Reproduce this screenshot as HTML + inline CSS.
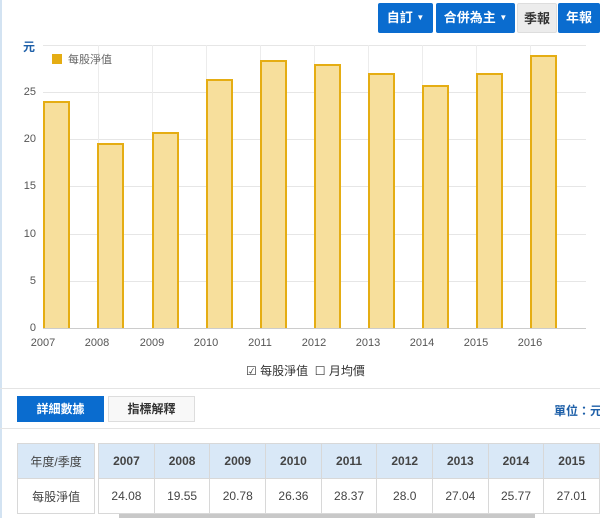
<!DOCTYPE html>
<html><head><meta charset="utf-8"><style>
*{margin:0;padding:0;box-sizing:border-box}
body{width:600px;height:518px;overflow:hidden;background:#fff;font-family:"Liberation Sans","Noto Sans CJK TC",sans-serif;position:relative}
.a{position:absolute}
.btn{position:absolute;color:#fff;background:#0a6ccf;font-size:13px;font-weight:bold;text-align:center;line-height:30px;height:30px;top:3px;border-radius:2px}
.btn small{font-size:8px;vertical-align:2px}
.yl{position:absolute;left:0;width:36px;text-align:right;font-size:11px;color:#555}
.xl{position:absolute;top:337px;width:40px;text-align:center;font-size:11px;color:#555}
.g{position:absolute;left:43px;width:543px;height:1px;background:#e6e6e6}
.v{position:absolute;top:45px;width:1px;height:283px;background:#ececec}
.bar{position:absolute;width:27px;background:#f7df9c;border:2px solid #e5ad13;border-bottom:none}
table{border-collapse:collapse;position:absolute;top:443px;left:17px}
td{border:1px solid #d8d8d8;text-align:center;font-size:12px;color:#444;height:35px}
</style></head><body>
<div class="a" style="left:0;top:0;width:2px;height:518px;background:#d3e3f2"></div>
<div class="btn" style="left:378px;width:55px">自訂 <small>▼</small></div>
<div class="btn" style="left:436px;width:79px">合併為主 <small>▼</small></div>
<div class="btn" style="left:517px;width:40px;background:#ececec;color:#333;border:1px solid #ddd">季報</div>
<div class="btn" style="left:558px;width:42px">年報</div>
<div class="a" style="left:23px;top:38px;font-size:12px;font-weight:bold;color:#1d5fa8">元</div>
<div class="g" style="top:45px"></div>
<div class="g" style="top:92px"></div><div class="g" style="top:139px"></div><div class="g" style="top:186px"></div><div class="g" style="top:234px"></div><div class="g" style="top:281px"></div>
<div class="v" style="left:98px"></div><div class="v" style="left:152px"></div><div class="v" style="left:206px"></div><div class="v" style="left:260px"></div><div class="v" style="left:314px"></div><div class="v" style="left:368px"></div><div class="v" style="left:422px"></div><div class="v" style="left:476px"></div><div class="v" style="left:530px"></div>
<div class="a" style="left:43px;top:328px;width:543px;height:1px;background:#ccc"></div>
<div class="yl" style="top:86px">25</div><div class="yl" style="top:133px">20</div><div class="yl" style="top:180px">15</div><div class="yl" style="top:228px">10</div><div class="yl" style="top:275px">5</div><div class="yl" style="top:322px">0</div>
<div class="a" style="left:52px;top:54px;width:10px;height:10px;background:#e5ad13"></div>
<div class="a" style="left:68px;top:51px;font-size:11px;color:#666">每股淨值</div>
<div class="bar" style="left:43px;top:101px;height:227px"></div>
<div class="bar" style="left:97px;top:143px;height:185px"></div>
<div class="bar" style="left:152px;top:132px;height:196px"></div>
<div class="bar" style="left:206px;top:79px;height:249px"></div>
<div class="bar" style="left:260px;top:60px;height:268px"></div>
<div class="bar" style="left:314px;top:64px;height:264px"></div>
<div class="bar" style="left:368px;top:73px;height:255px"></div>
<div class="bar" style="left:422px;top:85px;height:243px"></div>
<div class="bar" style="left:476px;top:73px;height:255px"></div>
<div class="bar" style="left:530px;top:55px;height:273px"></div>
<div class="xl" style="left:23px">2007</div><div class="xl" style="left:77px">2008</div><div class="xl" style="left:132px">2009</div><div class="xl" style="left:186px">2010</div><div class="xl" style="left:240px">2011</div><div class="xl" style="left:294px">2012</div><div class="xl" style="left:348px">2013</div><div class="xl" style="left:402px">2014</div><div class="xl" style="left:456px">2015</div><div class="xl" style="left:510px">2016</div>
<div class="a" style="left:246px;top:362px;font-size:12px;color:#333">☑ 每股淨值 &nbsp;☐ 月均價</div>
<div class="a" style="left:0;top:388px;width:600px;height:1px;background:#e4e4e4"></div>
<div class="a" style="left:17px;top:396px;width:87px;height:26px;background:#0a6ccf;color:#fff;font-size:12px;font-weight:bold;text-align:center;line-height:26px">詳細數據</div>
<div class="a" style="left:108px;top:396px;width:87px;height:26px;background:#f8f8f8;border:1px solid #ddd;color:#333;font-size:12px;font-weight:bold;text-align:center;line-height:24px">指標解釋</div>
<div class="a" style="left:554px;top:402px;font-size:12px;font-weight:bold;color:#1d5fa8;white-space:nowrap">單位：元</div>
<div class="a" style="left:0;top:428px;width:600px;height:1px;background:#e4e4e4"></div>
<table>
<tr style="background:#d9e8f7;font-weight:bold"><td style="width:78px;font-weight:normal">年度/季度</td><td style="width:4px;background:#fff;border-top:none;border-bottom:none"></td><td style="width:56px;font-weight:bold">2007</td><td style="width:56px;font-weight:bold">2008</td><td style="width:56px;font-weight:bold">2009</td><td style="width:56px;font-weight:bold">2010</td><td style="width:56px;font-weight:bold">2011</td><td style="width:56px;font-weight:bold">2012</td><td style="width:56px;font-weight:bold">2013</td><td style="width:56px;font-weight:bold">2014</td><td style="width:56px;font-weight:bold">2015</td></tr>
<tr><td>每股淨值</td><td style="border-top:none;border-bottom:none"></td><td>24.08</td><td>19.55</td><td>20.78</td><td>26.36</td><td>28.37</td><td>28.0</td><td>27.04</td><td>25.77</td><td>27.01</td></tr>
</table>
<div class="a" style="left:119px;top:514px;width:416px;height:4px;background:#c8c8c8"></div>
</body></html>
